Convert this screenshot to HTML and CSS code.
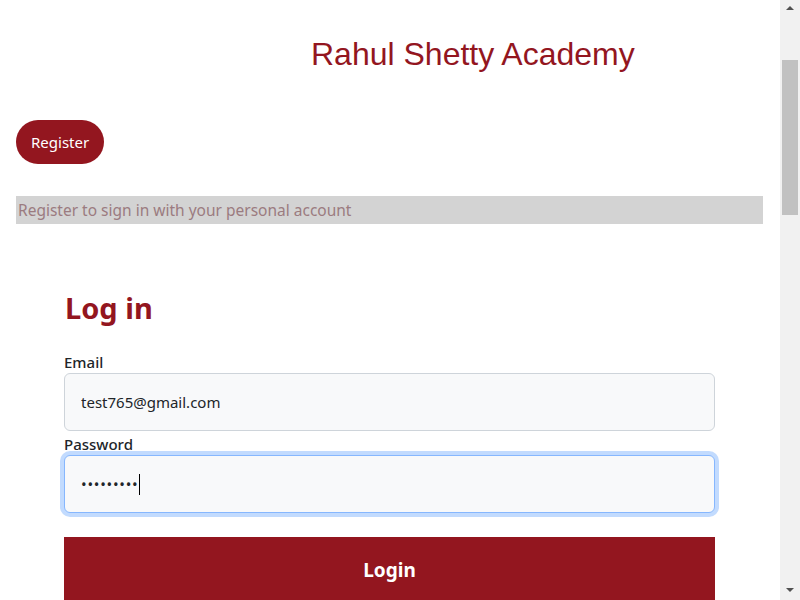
FILE: index.html
```html
<!DOCTYPE html>
<html lang="en">
<head>
<meta charset="utf-8">
<title>Rahul Shetty Academy - Login</title>
<link rel="stylesheet" href="styles.css">
</head>
<body>
<div class="page">
  <header class="brand">
    <h1 class="brand-title">Rahul Shetty Academy</h1>
  </header>
  <div class="register-row">
    <button class="btn-register" type="button">Register</button>
  </div>
  <p class="register-note">Register to sign in with your personal account</p>
  <main class="login">
    <h2 class="login-title">Log in</h2>
    <form class="login-form">
      <label class="field-label" for="email">Email</label>
      <input class="field-input" id="email" type="email" value="test765@gmail.com">
      <label class="field-label" for="password">Password</label>
      <div class="field-input focused" id="password"><span class="dots">•••••••••</span><span class="caret"></span></div>
      <button class="btn-login" type="button">Login</button>
    </form>
  </main>
</div>
<div class="scrollbar" aria-hidden="true">
  <span class="sb-arrow sb-up"></span>
  <span class="sb-thumb"></span>
  <span class="sb-arrow sb-down"></span>
</div>
</body>
</html>
```
FILE: styles.css
```css
html, body {
  margin: 0;
  padding: 0;
  background: #fff;
}
body {
  font-family: "Noto Sans", "Open Sans", sans-serif;
  color: #212529;
  padding-right: 20px;
}
.page {
  padding: 0 17px 40px 16px;
}
.brand {
  padding-top: 36px;
  padding-left: 295px;
}
.brand-title {
  margin: 0;
  font-family: "Liberation Sans", Arial, sans-serif;
  font-weight: 400;
  font-size: 32px;
  line-height: 37px;
  color: #93161f;
}
.register-row {
  padding-top: 47px;
}
.btn-register {
  height: 44px;
  padding: 0 15px;
  border: none;
  border-radius: 22px;
  background: #93161f;
  color: #fff;
  font-family: "Noto Sans", sans-serif;
  font-size: 15px;
  cursor: pointer;
}
.register-note {
  margin: 32px 0 0;
  height: 28px;
  line-height: 28px;
  padding-left: 2px;
  background: #d3d3d3;
  color: #9b7b80;
  font-size: 15.5px;
}
.login {
  width: 651px;
  margin: 0 0 0 48px;
  padding-top: 64px;
}
.login-title {
  margin: 0 0 23px;
  font-size: 29px;
  line-height: 40px;
  font-weight: 700;
  color: #93161f;
  padding-left: 1px;
}
.login-form {
  display: flex;
  flex-direction: column;
}
.field-label {
  font-size: 15px;
  font-weight: 500;
  line-height: 22px;
  color: #212529;
}
.field-input {
  box-sizing: border-box;
  height: 58px;
  width: 100%;
  margin: 0 0 2px;
  padding: 0 16px;
  border: 1px solid #ced4da;
  border-radius: 6px;
  background: #f8f9fa;
  font-family: "Noto Sans", sans-serif;
  font-size: 15px;
  color: #212529;
}
.field-input.focused {
  display: flex;
  align-items: center;
  border-color: #86b7fe;
  box-shadow: 0 0 0 4px rgba(13, 110, 253, 0.25);
  margin-bottom: 24px;
}
.dots {
  font-size: 15px;
  letter-spacing: 0.75px;
  color: #212529;
}
.caret {
  width: 1px;
  height: 21px;
  background: #000;
}
.btn-login {
  height: 64px;
  padding-top: 2px;
  border: none;
  background: #93161f;
  color: #fff;
  font-family: "Noto Sans", sans-serif;
  font-weight: 700;
  font-size: 19px;
  cursor: pointer;
}
.scrollbar {
  position: fixed;
  top: 0;
  right: 0;
  bottom: 0;
  width: 20px;
  background: #f1f1f1;
}
.sb-thumb {
  position: absolute;
  top: 60px;
  left: 2px;
  width: 16px;
  height: 155px;
  background: #c1c1c1;
}
.sb-arrow {
  position: absolute;
  left: 6px;
  width: 0;
  height: 0;
  border-left: 4px solid transparent;
  border-right: 4px solid transparent;
}
.sb-up {
  top: 6px;
  border-bottom: 4px solid #505050;
}
.sb-down {
  bottom: 8px;
  border-top: 4px solid #505050;
}
```
